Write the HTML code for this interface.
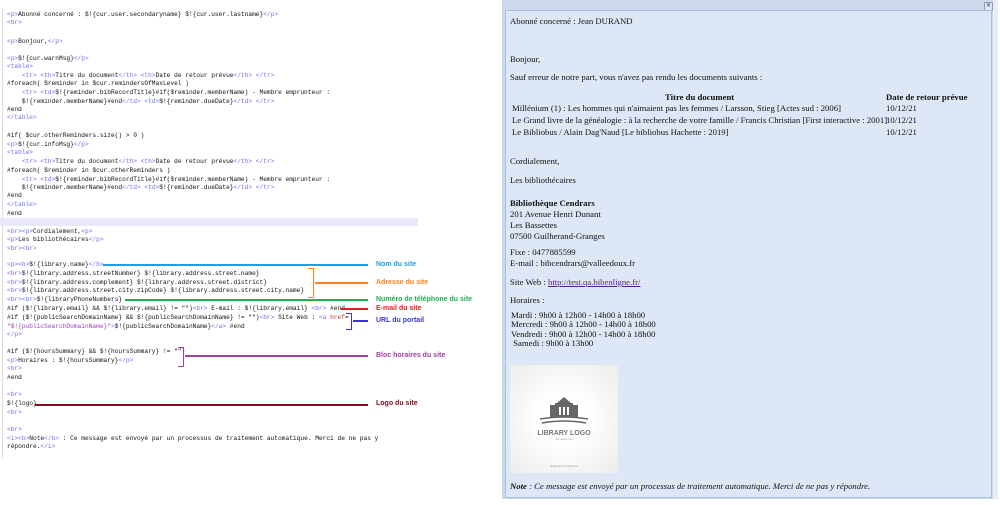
<!DOCTYPE html>
<html><head><meta charset="utf-8"><style>
body{margin:0;width:1000px;height:505px;background:#fff;position:relative;overflow:hidden}
.c{position:absolute;left:7px;font-family:"Liberation Mono",monospace;font-size:6.2px;line-height:8px;color:#111;white-space:pre}
.t{color:#7070ee}.s{color:#a040c0}
.lb{position:absolute;left:376px;font-family:"Liberation Sans",sans-serif;font-size:7px;font-weight:bold;white-space:nowrap}
.ln{position:absolute;height:1.5px}
.r{position:absolute;left:510px;font-family:"Liberation Serif",serif;font-size:8.7px;line-height:11px;color:#111;white-space:pre}
</style></head><body>
<div style="position:absolute;left:2px;top:8px;width:1px;height:450px;background:#ddd"></div>
<div style="position:absolute;left:0;top:218px;width:418px;height:8px;background:#e8e8fa"></div>
<div class="c" style="top:11px"><span class="t">&lt;p&gt;</span>Abonné concerné : $!{cur.user.secondaryname} $!{cur.user.lastname}<span class="t">&lt;/p&gt;</span></div>
<div class="c" style="top:19px"><span class="t">&lt;br&gt;</span></div>
<div class="c" style="top:38px"><span class="t">&lt;p&gt;</span>Bonjour,<span class="t">&lt;/p&gt;</span></div>
<div class="c" style="top:55px"><span class="t">&lt;p&gt;</span>$!{cur.warnMsg}<span class="t">&lt;/p&gt;</span></div>
<div class="c" style="top:63px"><span class="t">&lt;table&gt;</span></div>
<div class="c" style="top:72px">    <span class="t">&lt;tr&gt; &lt;th&gt;</span>Titre du document<span class="t">&lt;/th&gt; &lt;th&gt;</span>Date de retour prévue<span class="t">&lt;/th&gt; &lt;/tr&gt;</span></div>
<div class="c" style="top:80px">#foreach( $reminder in $cur.remindersOfMaxLevel )</div>
<div class="c" style="top:89px">    <span class="t">&lt;tr&gt; &lt;td&gt;</span>$!{reminder.bibRecordTitle}#if($reminder.memberName) - Membre emprunteur :</div>
<div class="c" style="top:98px">    $!{reminder.memberName}#end<span class="t">&lt;/td&gt; &lt;td&gt;</span>$!{reminder.dueDate}<span class="t">&lt;/td&gt; &lt;/tr&gt;</span></div>
<div class="c" style="top:106px">#end</div>
<div class="c" style="top:114px"><span class="t">&lt;/table&gt;</span></div>
<div class="c" style="top:132px">#if( $cur.otherReminders.size() &gt; 0 )</div>
<div class="c" style="top:141px"><span class="t">&lt;p&gt;</span>$!{cur.infoMsg}<span class="t">&lt;/p&gt;</span></div>
<div class="c" style="top:149px"><span class="t">&lt;table&gt;</span></div>
<div class="c" style="top:158px">    <span class="t">&lt;tr&gt; &lt;th&gt;</span>Titre du document<span class="t">&lt;/th&gt; &lt;th&gt;</span>Date de retour prévue<span class="t">&lt;/th&gt; &lt;/tr&gt;</span></div>
<div class="c" style="top:167px">#foreach( $reminder in $cur.otherReminders )</div>
<div class="c" style="top:176px">    <span class="t">&lt;tr&gt; &lt;td&gt;</span>$!{reminder.bibRecordTitle}#if($reminder.memberName) - Membre emprunteur :</div>
<div class="c" style="top:184px">    $!{reminder.memberName}#end<span class="t">&lt;/td&gt; &lt;td&gt;</span>$!{reminder.dueDate}<span class="t">&lt;/td&gt; &lt;/tr&gt;</span></div>
<div class="c" style="top:192px">#end</div>
<div class="c" style="top:201px"><span class="t">&lt;/table&gt;</span></div>
<div class="c" style="top:210px">#end</div>
<div class="c" style="top:228px"><span class="t">&lt;br&gt;&lt;p&gt;</span>Cordialement,<span class="t">&lt;p&gt;</span></div>
<div class="c" style="top:236px"><span class="t">&lt;p&gt;</span>Les bibliothécaires<span class="t">&lt;/p&gt;</span></div>
<div class="c" style="top:245px"><span class="t">&lt;br&gt;&lt;br&gt;</span></div>
<div class="c" style="top:261px"><span class="t">&lt;p&gt;&lt;b&gt;</span>$!{library.name}<span class="t">&lt;/b&gt;</span></div>
<div class="c" style="top:270px"><span class="t">&lt;br&gt;</span>$!{library.address.streetNumber} $!{library.address.street.name}</div>
<div class="c" style="top:279px"><span class="t">&lt;br&gt;</span>$!{library.address.complement} $!{library.address.street.district}</div>
<div class="c" style="top:287px"><span class="t">&lt;br&gt;</span>$!{library.address.street.city.zipCode} $!{library.address.street.city.name}</div>
<div class="c" style="top:296px"><span class="t">&lt;br&gt;&lt;br&gt;</span>$!{libraryPhoneNumbers}</div>
<div class="c" style="top:305px">#if ($!{library.email} &amp;&amp; $!{library.email} != "")<span class="t">&lt;br&gt;</span> E-mail : $!{library.email} <span class="t">&lt;br&gt;</span> #end</div>
<div class="c" style="top:314px">#if ($!{publicSearchDomainName} &amp;&amp; $!{publicSearchDomainName} != "")<span class="t">&lt;br&gt;</span> Site Web : <span class="t">&lt;a</span> <span style="color:#d03030">href</span>=</div>
<div class="c" style="top:323px"><span class="s">"$!{publicSearchDomainName}"</span><span class="t">&gt;</span>$!{publicSearchDomainName}<span class="t">&lt;/a&gt;</span> #end</div>
<div class="c" style="top:331px"><span class="t">&lt;/p&gt;</span></div>
<div class="c" style="top:348px">#if ($!{hoursSummary} &amp;&amp; $!{hoursSummary} != "")</div>
<div class="c" style="top:357px"><span class="t">&lt;p&gt;</span>Horaires : $!{hoursSummary}<span class="t">&lt;/p&gt;</span></div>
<div class="c" style="top:365px"><span class="t">&lt;br&gt;</span></div>
<div class="c" style="top:374px">#end</div>
<div class="c" style="top:391px"><span class="t">&lt;br&gt;</span></div>
<div class="c" style="top:400px">$!{logo}</div>
<div class="c" style="top:409px"><span class="t">&lt;br&gt;</span></div>
<div class="c" style="top:426px"><span class="t">&lt;br&gt;</span></div>
<div class="c" style="top:435px"><span class="t">&lt;i&gt;&lt;b&gt;</span>Note<span class="t">&lt;/b&gt;</span> : Ce message est envoyé par un processus de traitement automatique. Merci de ne pas y</div>
<div class="c" style="top:443px">répondre.<span class="t">&lt;/i&gt;</span></div>

<div class="ln" style="left:103px;top:264px;width:265px;background:#1ea0e0"></div>
<div class="lb" style="top:261px;color:#1ea0e0">Nom du site</div>
<div style="position:absolute;left:308px;top:268px;width:5px;height:28px;border:1.5px solid #ff8020;border-left:none"></div>
<div class="ln" style="left:315px;top:282px;width:53px;background:#ff8020"></div>
<div class="lb" style="top:279px;color:#ff8020">Adresse du site</div>
<div class="ln" style="left:125px;top:299px;width:243px;background:#20b050"></div>
<div class="lb" style="top:296px;color:#20b050">Numéro de téléphone du site</div>
<div class="ln" style="left:341px;top:308px;width:27px;background:#e02020"></div>
<div class="lb" style="top:305px;color:#e02020">E-mail du site</div>
<div style="position:absolute;left:346px;top:313px;width:5px;height:15px;border:1.5px solid #3838c8;border-left:none"></div>
<div class="ln" style="left:353px;top:320px;width:15px;background:#3838c8"></div>
<div class="lb" style="top:317px;color:#3838c8">URL du portail</div>
<div style="position:absolute;left:178px;top:347px;width:5px;height:18px;border:1.5px solid #a040a0;border-left:none"></div>
<div class="ln" style="left:185px;top:355px;width:183px;background:#a040a0"></div>
<div class="lb" style="top:352px;color:#a040a0">Bloc horaires du site</div>
<div class="ln" style="left:35px;top:404px;width:333px;background:#801020"></div>
<div class="lb" style="top:400px;color:#801020">Logo du site</div>

<div style="position:absolute;left:502px;top:0;width:496px;height:499px;background:#cdd9ea"></div>
<div style="position:absolute;left:984px;top:2px;width:7px;height:7px;background:#dde6f3;border:1px solid #99a;font:6px sans-serif;color:#335;text-align:center;line-height:7px">✕</div>
<div style="position:absolute;left:993px;top:0;width:5px;height:499px;background:#e8edf3"></div>
<div style="position:absolute;left:505px;top:10px;width:485px;height:486px;background:#dde7f6;border:1px solid #a8c0e0"></div>
<div class="r" style="top:16px">Abonné concerné : Jean DURAND</div>
<div class="r" style="top:54px">Bonjour,</div>
<div class="r" style="top:72px">Sauf erreur de notre part, vous n'avez pas rendu les documents suivants :</div>
<div class="r" style="top:92px;left:665px;font-weight:bold">Titre du document</div>
<div class="r" style="top:92px;left:886px;font-weight:bold">Date de retour prévue</div>
<div class="r" style="top:103px;left:512px">Millénium (1) : Les hommes qui n'aimaient pas les femmes / Larsson, Stieg [Actes sud : 2006]</div>
<div class="r" style="top:115px;left:512px">Le Grand livre de la généalogie : à la recherche de votre famille / Francis Christian [First interactive : 2001]</div>
<div class="r" style="top:127px;left:512px">Le Bibliobus / Alain Dag'Naud [Le bibliobus Hachette : 2019]</div>
<div class="r" style="top:103px;left:886px">10/12/21</div>
<div class="r" style="top:115px;left:886px">10/12/21</div>
<div class="r" style="top:127px;left:886px">10/12/21</div>
<div class="r" style="top:156px">Cordialement,</div>
<div class="r" style="top:175px">Les bibliothécaires</div>
<div class="r" style="top:198px;font-weight:bold">Bibliothèque Cendrars</div>
<div class="r" style="top:209px">201 Avenue Henri Dunant
Les Bassettes
07500 Guilherand-Granges</div>
<div class="r" style="top:247px;line-height:10.5px">Fixe : 0477885599
E-mail : bibcendrars@valleedoux.fr</div>
<div class="r" style="top:277px">Site Web : <span style="color:#551a8b;text-decoration:underline">http://test.qa.bibenligne.fr/</span></div>
<div class="r" style="top:295px">Horaires :</div>
<div class="r" style="top:311px;left:511px;line-height:9.3px">Mardi : 9h00 à 12h00 - 14h00 à 18h00
Mercredi : 9h00 à 12h00 - 14h00 à 18h00
Vendredi : 9h00 à 12h00 - 14h00 à 18h00
 Samedi : 9h00 à 13h00</div>
<div style="position:absolute;left:510px;top:365px;width:108px;height:108px;background:radial-gradient(circle,#fff 30%,#ececec 100%)">
<svg width="108" height="108" viewBox="0 0 108 108">
<g fill="#666"><rect x="45" y="38" width="18" height="14"/><path d="M47 38 L54 32 L61 38Z"/><rect x="40" y="40" width="6" height="12"/><rect x="62" y="40" width="6" height="12"/></g>
<g fill="#fff"><rect x="49" y="42" width="2" height="8"/><rect x="53" y="42" width="2" height="8"/><rect x="57" y="42" width="2" height="8"/></g>
<path d="M30 54 Q54 50 78 54 M32 58 Q54 54 76 58" stroke="#666" stroke-width="1.5" fill="none"/>
<text x="54" y="70" font-family="Liberation Sans" font-size="7" font-weight="bold" fill="#777" text-anchor="middle">LIBRARY LOGO</text>
<text x="54" y="75" font-family="Liberation Sans" font-size="2.5" fill="#999" text-anchor="middle">your slogan here</text>
<text x="54" y="102" font-family="Liberation Sans" font-size="2.5" fill="#999" text-anchor="middle">designed by Freepik.com</text>
</svg></div>
<div class="r" style="top:481px;font-style:italic"><b>Note</b> : Ce message est envoyé par un processus de traitement automatique. Merci de ne pas y répondre.</div>
</body></html>
